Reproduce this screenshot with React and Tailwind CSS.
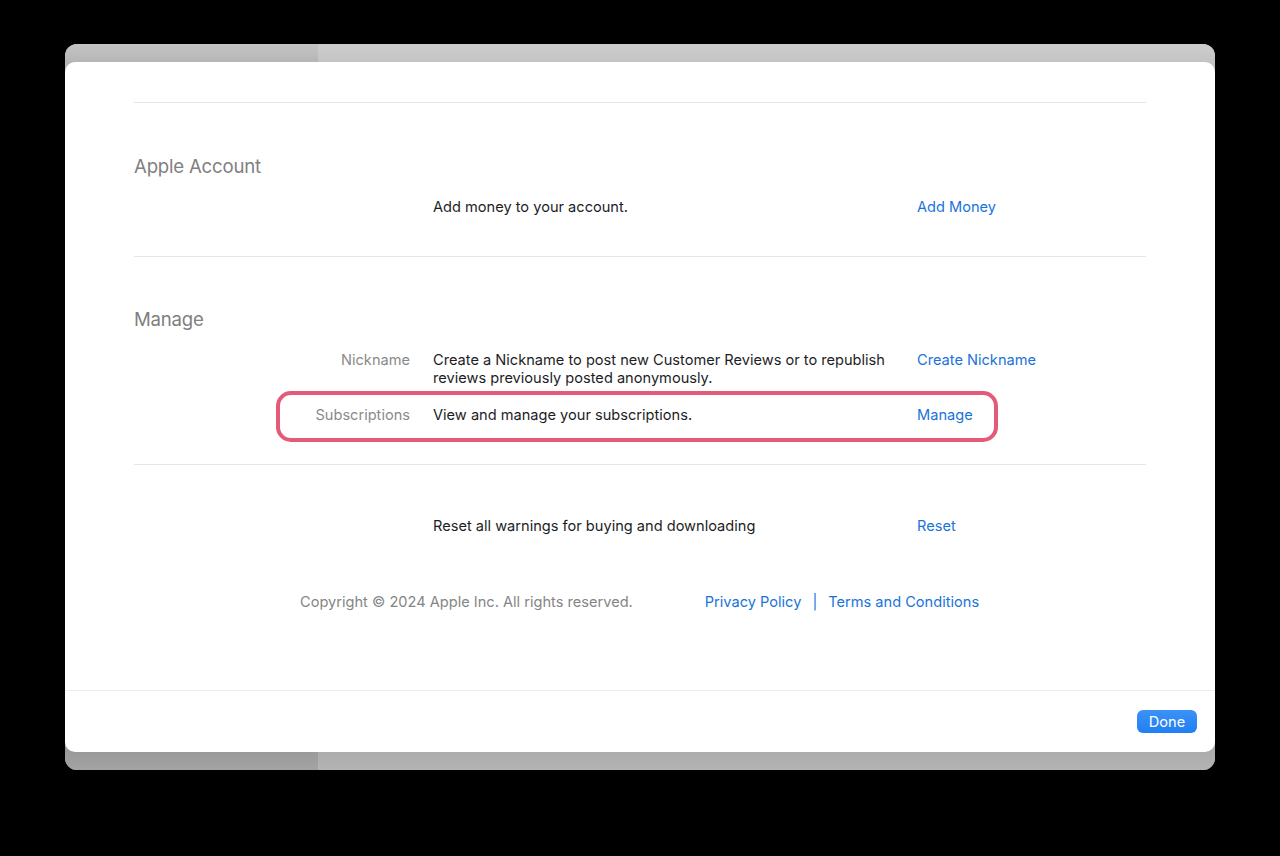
export default function App() {
  const font = { fontFamily: 'Inter, "Noto Sans", sans-serif' };
  return (
    <div className="w-[1280px] h-[856px] bg-black relative overflow-hidden" style={font}>
      {/* window behind */}
      <div className="absolute left-[65px] top-[44px] w-[1150px] h-[726px] rounded-[12px] overflow-hidden flex flex-col bg-[#bdbdbd]">
        <div className="h-[18px] flex">
          <div className="w-[253px] bg-gradient-to-b from-[#c4c4c4] to-[#b6b6b6]"></div>
          <div className="flex-1 bg-gradient-to-b from-[#cdcdcd] to-[#c4c4c4]"></div>
        </div>
        <div className="flex-1 flex">
          <div className="w-[253px] bg-gradient-to-b from-[#b6b6b6] to-[#9a9a9a]"></div>
          <div className="flex-1 bg-gradient-to-b from-[#c4c4c4] to-[#acacac]"></div>
        </div>
        <div className="h-[18px] flex">
          <div className="w-[253px] bg-gradient-to-b from-[#9a9a9a] to-[#a3a3a3]"></div>
          <div className="flex-1 bg-gradient-to-b from-[#acacac] to-[#b4b4b4]"></div>
        </div>
      </div>
      {/* sheet */}
      <div className="absolute left-[65px] top-[62px] w-[1150px] h-[690px] bg-white rounded-[10px] flex flex-col">
        <div className="flex-1 px-[69px] pt-[40px] relative">
          <div className="h-px bg-[#e6e6e6]"></div>
          {/* Apple Account */}
          <div className="pt-[51px] pb-[40px]">
            <div className="text-[18.6px] leading-[24px] text-[#808080] tracking-[-0.2px]">Apple Account</div>
            <div className="grid grid-cols-[276px_461px_1fr] gap-x-[23px] mt-[20px] text-[14.6px] leading-[18px]">
              <div></div>
              <div className="text-[#1d1d1f]">Add money to your account.</div>
              <div className="text-[#1a73d9]">Add Money</div>
            </div>
          </div>
          <div className="h-px bg-[#e6e6e6]"></div>
          {/* Manage */}
          <div className="pt-[50px] pb-[40px] relative">
            <div className="text-[18.6px] leading-[24px] text-[#808080] tracking-[-0.2px]">Manage</div>
            <div className="grid grid-cols-[276px_461px_1fr] gap-x-[23px] gap-y-[19px] mt-[20px] text-[14.6px] leading-[18px]">
              <div className="text-right text-[#8a8a8a]">Nickname</div>
              <div className="text-[#1d1d1f]">Create a Nickname to post new Customer Reviews or to republish reviews previously posted anonymously.</div>
              <div className="text-[#1a73d9]">Create Nickname</div>
              <div className="text-right text-[#8a8a8a]">Subscriptions</div>
              <div className="text-[#1d1d1f]">View and manage your subscriptions.</div>
              <div className="text-[#1a73d9]">Manage</div>
            </div>
            <div className="absolute left-[142px] top-[134px] w-[722px] h-[51px] border-[4px] border-[#e45a79] rounded-[15px] pointer-events-none"></div>
          </div>
          <div className="h-px bg-[#e6e6e6]"></div>
          <div className="pt-[52px]">
            <div className="grid grid-cols-[276px_461px_1fr] gap-x-[23px] text-[14.6px] leading-[18px]">
              <div></div>
              <div className="text-[#1d1d1f]">Reset all warnings for buying and downloading</div>
              <div className="text-[#1a73d9]">Reset</div>
            </div>
          </div>
          <div className="mt-[58px] flex text-[14.6px] leading-[18px] pl-[166px]">
            <span className="text-[#858585]">Copyright © 2024 Apple Inc. All rights reserved.</span>
            <span className="ml-[72px] text-[#1a73d9]">Privacy Policy</span>
            <span className="mx-[11px] text-[#1a73d9]">|</span>
            <span className="text-[#1a73d9]">Terms and Conditions</span>
          </div>
        </div>
        <div className="h-px bg-[#ececec]"></div>
        <div className="h-[61px] flex items-center justify-end pr-[18px]">
          <button className="h-[23px] w-[60px] rounded-[6px] bg-gradient-to-b from-[#3b92f7] to-[#1f7ff2] text-white text-[14.6px] leading-[18px]">Done</button>
        </div>
      </div>
    </div>
  );
}
